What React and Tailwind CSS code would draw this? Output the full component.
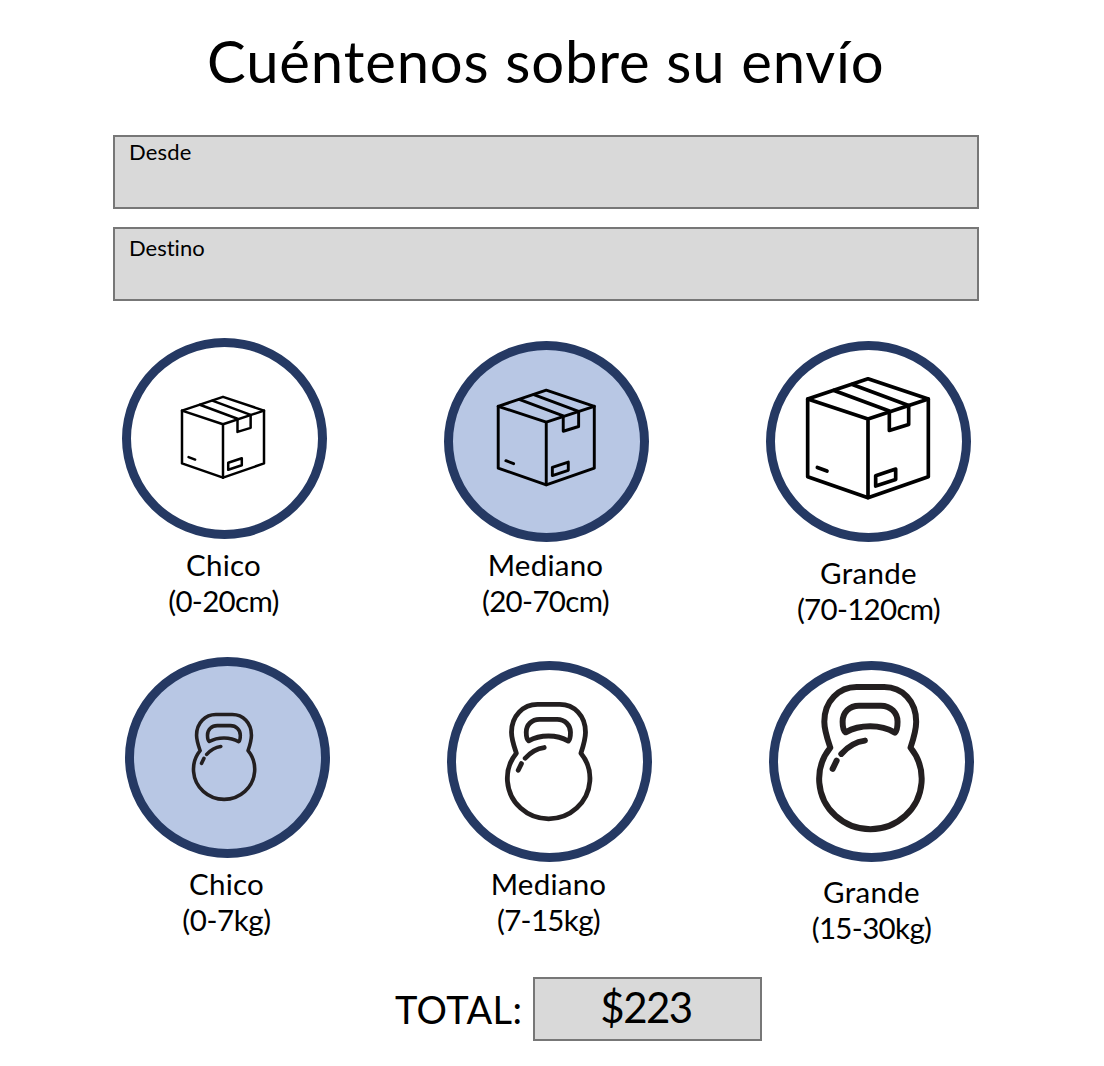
const BoxIcon = ({ className }) => (
  <svg viewBox="135 137 378 373" className={className} fill="none" stroke="#000" strokeWidth="11" strokeLinejoin="round" strokeLinecap="round" aria-hidden="true">
    <path d="M143 206 324 145 505 206V439L324 502 143 439Z" />
    <path d="M143 206 324 266 505 206M324 266V502" />
    <path d="M222 180 388 242M277 162 446 225" />
    <path d="M388 244V300L446 282V226" />
    <path d="M347 436 407 416V447L347 467Z" />
    <path d="M172 411 201 422" />
  </svg>
);

const KettlebellIcon = ({ className }) => (
  <svg viewBox="160 98 332 452" className={className} fill="none" stroke="#231f20" strokeWidth="18" strokeLinejoin="round" strokeLinecap="round" aria-hidden="true">
    <path d="M206 292C196 262 188 240 188 214C188 152 232 110 285 110H368C422 110 464 152 464 214C464 240 457 262 447 292A154 151 0 1 1 206 292Z" />
    <path d="M252 246C244 240 243 226 243 214C243 186 264 166 292 166H358C388 166 408 188 408 214C408 226 408 240 400 247C378 234 352 228 326 228C300 228 273 234 252 246Z" />
    <path d="M239 311Q270 276 310 271M225 331 213 356" />
  </svg>
);

const sizes = [
  { name: "Chico", range: "(0-20cm)", Icon: BoxIcon, icon: "w-[86px] h-[84.5px] mr-[3px] mb-[2px]", label: "mt-2", nameTrack: "tracking-[0.2px]", rangeTrack: "tracking-[-0.65px]" },
  { name: "Mediano", range: "(20-70cm)", Icon: BoxIcon, icon: "w-[100.5px] h-[99px] mr-[1px] mb-[8px]", item: "mt-[3px]", label: "mt-[5px]", selected: true, nameTrack: "tracking-[0.25px]", rangeTrack: "tracking-[-0.65px]" },
  { name: "Grande", range: "(70-120cm)", Icon: BoxIcon, icon: "w-[126px] h-[124.5px] mr-[1px] mb-[7px]", item: "mt-[3px]", label: "mt-[13px] ml-[2px]", nameTrack: "tracking-[0.3px]", rangeTrack: "tracking-[-0.7px]" },
];

const weights = [
  { name: "Chico", range: "(0-7kg)", Icon: KettlebellIcon, icon: "w-[66px] h-[90px] mr-[7px] mb-[1px]", label: "mt-2", selected: true, nameTrack: "tracking-[0.2px]", rangeTrack: "tracking-[-0.4px]" },
  { name: "Mediano", range: "(7-15kg)", Icon: KettlebellIcon, icon: "w-[89px] h-[121.5px] mr-[3px] mt-[1px]", item: "mt-1", label: "mt-1", nameTrack: "tracking-[0.25px]", rangeTrack: "tracking-[-0.65px]" },
  { name: "Grande", range: "(15-30kg)", Icon: KettlebellIcon, icon: "w-[110.5px] h-[150.5px] mr-[2px] mb-[7px]", item: "mt-1", label: "mt-3 ml-[2px]", nameTrack: "tracking-[0.3px]", rangeTrack: "tracking-[-0.65px]" },
];

const Option = ({ name, range, Icon, icon, item = "", label, selected, nameTrack, rangeTrack }) => (
  <div className={`flex w-[205px] flex-col items-center ${item}`}>
    <button className={`flex h-[201px] w-[205px] items-center justify-center rounded-[50%] border-[9px] border-[#253963] ${selected ? "bg-[#b8c7e4]" : "bg-white"}`}>
      <Icon className={`shrink-0 ${icon}`} />
    </button>
    <div className={`mr-[2px] flex flex-col items-center whitespace-nowrap text-[29.5px] leading-[36px] ${label}`}>
      <span className={nameTrack}>{name}</span>
      <span className={rangeTrack}>{range}</span>
    </div>
  </div>
);

export default function App() {
  return (
    <main className="flex h-[1066px] w-[1104px] flex-col overflow-hidden bg-white font-['Lato',sans-serif] text-black [font-variant-ligatures:none]">
      <h1 className="ml-[207px] mt-[26px] h-[69px] whitespace-nowrap text-[58px] leading-[70px] tracking-[0.86px]">Cuéntenos sobre su envío</h1>
      <div className="ml-[113px] mt-10 flex w-[866px] flex-col gap-[18px]">
        <div className="h-[74px] border-2 border-[#777] bg-[#d9d9d9] pl-[14px] pt-[2px] text-[22px] leading-[26px] tracking-[0.2px]">Desde</div>
        <div className="h-[74px] border-2 border-[#777] bg-[#d9d9d9] pl-[14px] pt-[6px] text-[22px] leading-[26px]">Destino</div>
      </div>
      <section className="ml-[122px] mt-[37px] flex h-[319px] items-start gap-[117px]">
        {sizes.map((o) => <Option key={o.name} {...o} />)}
      </section>
      <section className="ml-[125px] flex h-[320px] items-start gap-[117px]">
        {weights.map((o) => <Option key={o.name} {...o} />)}
      </section>
      <div className="ml-[395px] flex h-16">
        <span className="w-[138px] whitespace-nowrap pt-[8px] text-[38px] leading-[48px] tracking-[0.4px]">TOTAL:</span>
        <div className="flex w-[229px] justify-center border-2 border-[#777] bg-[#d9d9d9] pr-[3px] pt-[4px] text-[42px] leading-[48px] tracking-[-1.5px]">$223</div>
      </div>
    </main>
  );
}
